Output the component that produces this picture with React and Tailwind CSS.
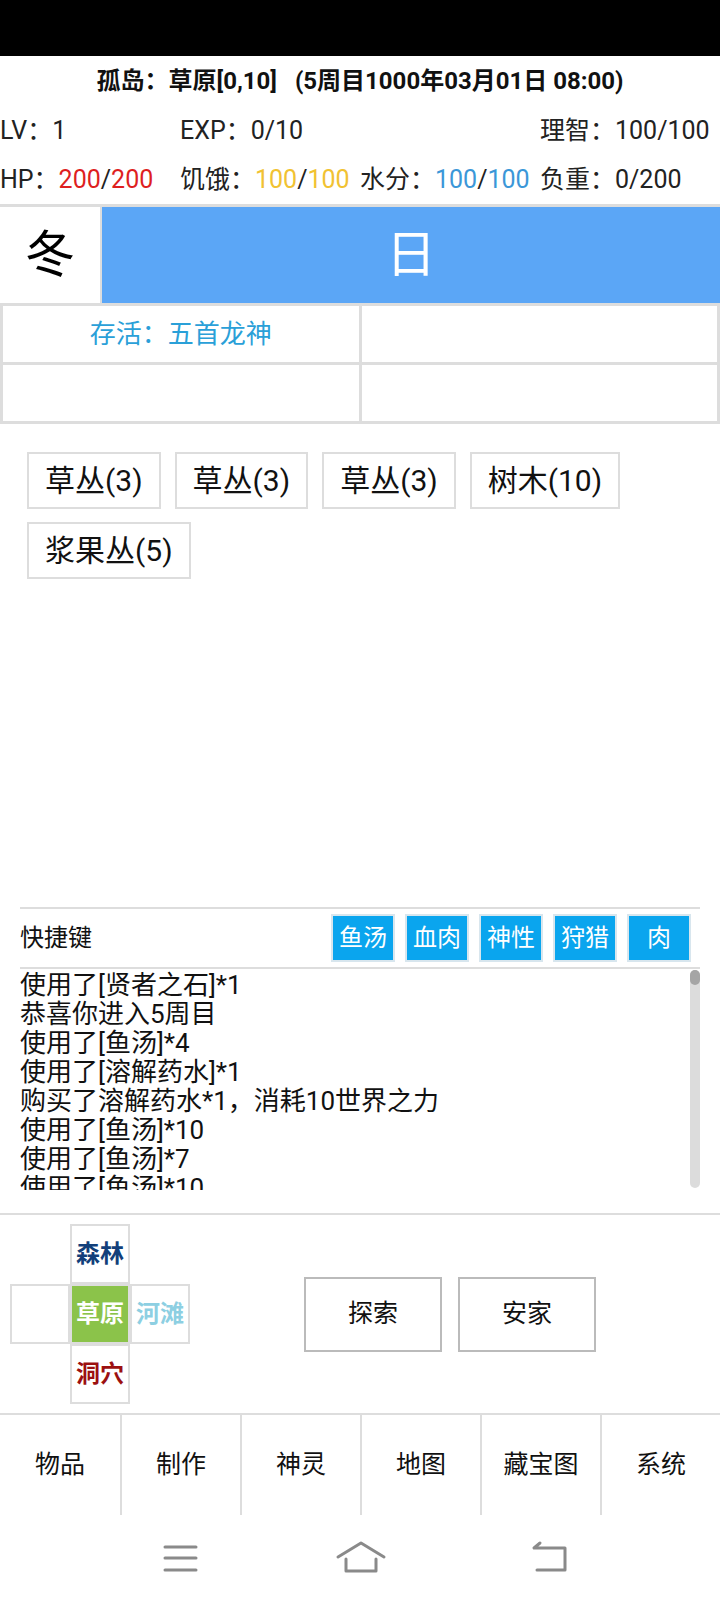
import React from 'react'

const resources = ['草丛(3)', '草丛(3)', '草丛(3)', '树木(10)', '浆果丛(5)']
const quickKeys = ['鱼汤', '血肉', '神性', '狩猎', '肉']
const logs = [
  '使用了[贤者之石]*1',
  '恭喜你进入5周目',
  '使用了[鱼汤]*4',
  '使用了[溶解药水]*1',
  '购买了溶解药水*1，消耗10世界之力',
  '使用了[鱼汤]*10',
  '使用了[鱼汤]*7',
  '使用了[鱼汤]*10',
]
const tabs = ['物品', '制作', '神灵', '地图', '藏宝图', '系统']

function MapCell({ label, className }) {
  return (
    <div className={`h-[60px] w-[60px] border-2 border-[#ddd] flex items-center justify-center text-[24px] font-bold ${className || ''}`}>
      {label}
    </div>
  )
}

export default function App() {
  return (
    <div className="w-[720px] h-[1600px] bg-white flex flex-col overflow-hidden text-[#222] font-[Roboto,'Noto_Sans_CJK_SC',sans-serif]">
      {/* status bar */}
      <div className="h-[56px] bg-black shrink-0" />

      {/* title */}
      <div className="h-[50px] shrink-0 flex items-center justify-center text-[24px] font-bold text-[#111] whitespace-pre">
        孤岛：草原[0,10]   (5周目1000年03月01日 08:00)
      </div>

      {/* stats */}
      <div className="h-[50px] shrink-0 grid grid-cols-4 items-center text-[25px]">
        <div>LV：1</div>
        <div>EXP：0/10</div>
        <div />
        <div>理智：100/100</div>
      </div>
      <div className="h-[48px] shrink-0 grid grid-cols-4 items-center text-[25px]">
        <div>HP：<span className="text-[#de1f1f]">200</span>/<span className="text-[#de1f1f]">200</span></div>
        <div>饥饿：<span className="text-[#f1c232]">100</span>/<span className="text-[#f1c232]">100</span></div>
        <div>水分：<span className="text-[#3b97d8]">100</span>/<span className="text-[#3b97d8]">100</span></div>
        <div>负重：0/200</div>
      </div>

      {/* season / time */}
      <div className="shrink-0 bg-[#ddd] pt-[3px] flex gap-[2px]">
        <div className="w-[100px] h-[96px] bg-white flex items-center justify-center text-[50px] text-black">冬</div>
        <div className="flex-1 h-[96px] bg-[#5ba6f6] flex items-center justify-center text-[50px] text-white">日</div>
      </div>

      {/* info grid */}
      <div className="shrink-0 bg-[#ddd] p-[3px] grid grid-cols-2 gap-[3px]">
        <div className="h-[56px] bg-white flex items-center justify-center text-[26px] text-[#2aa0d8]">存活：五首龙神</div>
        <div className="h-[56px] bg-white" />
        <div className="h-[56px] bg-white" />
        <div className="h-[56px] bg-white" />
      </div>

      {/* resources */}
      <div className="h-[483px] shrink-0 pt-[28px] px-[27px]">
        <div className="flex flex-wrap gap-x-[14px] gap-y-[13px]">
          {resources.map((r, i) => (
            <div key={i} className="h-[57px] px-[16px] border-2 border-[#ddd] flex items-center text-[30px] text-[#111]">
              {r}
            </div>
          ))}
        </div>
      </div>

      {/* quick keys */}
      <div className="mx-[20px] shrink-0 border-t-2 border-b-2 border-[#ddd] h-[62px] flex items-center justify-between pr-[9px]">
        <div className="text-[24px] text-[#111]">快捷键</div>
        <div className="flex gap-[10px]">
          {quickKeys.map((k) => (
            <div key={k} className="w-[64px] h-[48px] bg-[#0aa5ee] border-2 border-[#d8e6ee] flex items-center justify-center text-[24px] text-white">
              {k}
            </div>
          ))}
        </div>
      </div>

      {/* log */}
      <div className="mx-[20px] h-[221px] shrink-0 flex">
        <div className="flex-1 overflow-hidden pt-[2px] text-[26px] leading-[29px] text-[#111]">
          {logs.map((l, i) => (
            <div key={i} className="whitespace-nowrap">{l}</div>
          ))}
        </div>
        <div className="w-[10px] mt-[1px] mb-[2px] bg-[#dcdcdc] rounded-full flex flex-col">
          <div className="h-[15px] bg-[#a5a5a5] rounded-full" />
        </div>
      </div>

      <div className="h-[23px] shrink-0" />

      {/* map + actions */}
      <div className="h-[200px] shrink-0 border-t-2 border-[#ddd] flex items-center pl-[10px]">
        <div className="grid grid-cols-3 w-[180px]">
          <div />
          <MapCell label="森林" className="text-[#123f7a]" />
          <div />
          <MapCell label="" />
          <MapCell label="草原" className="bg-[#8bc34a] text-white" />
          <MapCell label="河滩" className="text-[#8dcfe2]" />
          <div />
          <MapCell label="洞穴" className="text-[#9c1010]" />
          <div />
        </div>
        <div className="ml-[114px] flex gap-[16px]">
          <div className="w-[138px] h-[75px] border-2 border-[#bbb] flex items-center justify-center text-[25px] text-[#111]">探索</div>
          <div className="w-[138px] h-[75px] border-2 border-[#bbb] flex items-center justify-center text-[25px] text-[#111]">安家</div>
        </div>
      </div>

      {/* bottom tabs */}
      <div className="h-[102px] shrink-0 border-t-2 border-[#ddd] grid grid-cols-6">
        {tabs.map((t, i) => (
          <div key={t} className={`flex items-center justify-center text-[25px] text-[#111] ${i > 0 ? 'border-l-2 border-[#ddd]' : ''}`}>
            {t}
          </div>
        ))}
      </div>

      {/* system nav */}
      <div className="flex-1">
        <svg width="720" height="85" viewBox="0 1515 720 85" className="block" fill="none" stroke="#8a8a8a" strokeWidth="3" strokeLinecap="round" strokeLinejoin="round">
          <path d="M165 1547 H196 M165 1558 H196 M165 1570 H196" />
          <path d="M338 1557 L361 1543 L384 1557" />
          <path d="M346 1559 V1571 H376 V1559" />
          <path d="M540 1543 L534 1548 H565 V1570 H537" />
        </svg>
      </div>
    </div>
  )
}
